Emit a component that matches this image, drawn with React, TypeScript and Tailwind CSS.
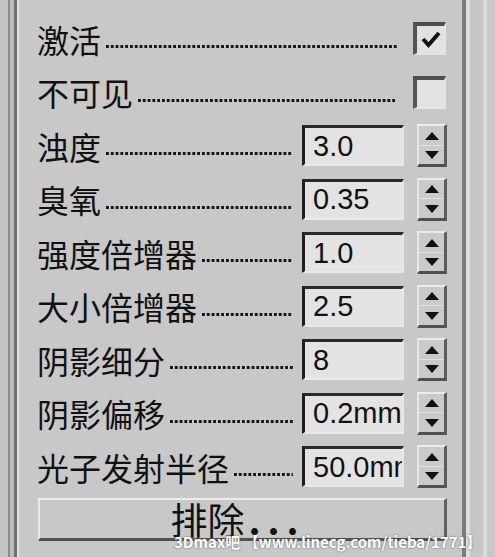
const CJK = "font-['Noto_Sans_CJK_SC','Noto_Sans',sans-serif]";
const NUM = "font-['Liberation_Sans',Arial,sans-serif]";

const checks = [
  { label: "激活", checked: true },
  { label: "不可见", checked: false },
];

const spinners = [
  { label: "浊度", value: "3.0" },
  { label: "臭氧", value: "0.35" },
  { label: "强度倍增器", value: "1.0" },
  { label: "大小倍增器", value: "2.5" },
  { label: "阴影细分", value: "8" },
  { label: "阴影偏移", value: "0.2mm" },
  { label: "光子发射半径", value: "50.0mm" },
];

const Leader = ({ gap }: { gap: string }) => (
  <div
    className={`ml-[5px] mt-[16px] h-[3px] flex-1 bg-[linear-gradient(to_right,#161616_2.5px,transparent_2.5px)] bg-[length:4.8px_3px] bg-repeat-x ${gap}`}
  />
);

const CheckBox = ({ checked }: { checked: boolean }) => (
  <div className="mr-[1px] flex h-[33px] w-[33px] items-center justify-center border-t-[4px] border-l-[4px] border-r-2 border-b-2 border-t-[#4e4e4e] border-l-[#555] border-r-[#e4e4e4] border-b-[#e4e4e4] bg-[#e2e2e2]">
    {checked && (
      <svg width="20" height="18" viewBox="0 0 20 18">
        <path d="M2 8 L7.5 14 L18 2" fill="none" stroke="#111" strokeWidth="4" strokeLinejoin="miter" />
      </svg>
    )}
  </div>
);

const Spinner = () => (
  <div className="ml-[13px] flex h-[43px] w-[30px] flex-col border-t-2 border-l-2 border-b-[3px] border-r-[3px] border-t-[#ececec] border-l-[#e6e6e6] border-b-[#505050] border-r-[#5c5c5c] bg-[#cacaca]">
    <div className="flex flex-1 items-center justify-center border-b border-b-[#e2e2e2]">
      <svg width="14" height="8" viewBox="0 0 14 8">
        <path d="M7 0 L14 8 L0 8 Z" fill="#111" />
      </svg>
    </div>
    <div className="flex flex-1 items-center justify-center">
      <svg width="14" height="8" viewBox="0 0 14 8">
        <path d="M0 0 L14 0 L7 8 Z" fill="#111" />
      </svg>
    </div>
  </div>
);

export default function App() {
  return (
    <div className={`relative flex h-[557px] w-[495px] overflow-hidden bg-[#c8c8c8] ${CJK}`}>
      {/* left panel edges */}
      <div className="flex shrink-0">
        <div className="w-[8px] bg-[#c4c4c4]" />
        <div className="w-[2px] bg-[#8a8a8a]" />
        <div className="w-[4px] bg-[#bcbcbc]" />
        <div className="w-[3px] bg-[#6e6e6e]" />
        <div className="w-[2px] bg-[#e2e2e2]" />
      </div>

      <div className="flex flex-1 flex-col pl-[18px] pr-[15px] pt-[12px]">
        {checks.map((c) => (
          <div key={c.label} className="flex h-[53.5px] items-center">
            <span className="text-[32px] leading-none text-[#111]">{c.label}</span>
            <Leader gap="mr-[16px]" />
            <CheckBox checked={c.checked} />
          </div>
        ))}
        {spinners.map((s) => (
          <div key={s.label} className="flex h-[53.5px] items-center">
            <span className="text-[32px] leading-none text-[#111]">{s.label}</span>
            <Leader gap="mr-[9px]" />
            <div
              className={`flex h-[41px] w-[102px] items-center overflow-hidden whitespace-nowrap border-t-[3px] border-l-[3px] border-r-2 border-b-2 border-t-[#2a2a2a] border-l-[#1e1e1e] border-r-[#e8e8e8] border-b-[#e8e8e8] bg-[#e3e3e3] pl-[8px] text-[29px] leading-none text-[#111] ${NUM}`}
            >
              {s.value}
            </div>
            <Spinner />
          </div>
        ))}

        <button
          type="button"
          className="ml-[1px] mt-[4.5px] flex h-[43px] items-center justify-center border-t-2 border-l-2 border-b-[3px] border-r-[3px] border-t-[#ececec] border-l-[#e8e8e8] border-b-[#505050] border-r-[#606060] bg-[#c8c8c8] pr-[8px] text-[37px] leading-none text-[#111]"
        >
          排除<span className="ml-[4px] font-bold tracking-[7px]">...</span>
        </button>
      </div>

      {/* right panel edges */}
      <div className="flex shrink-0">
        <div className="w-[4px] bg-[#7a7a7a]" />
        <div className="w-[4px] bg-[#dedede]" />
        <div className="w-[13px] bg-[#c6c6c6]" />
        <div className="w-[4px] bg-[#dcdcdc]" />
        <div className="w-[8px] bg-[#c8c8c8]" />
      </div>

      {/* watermark */}
      <div className="absolute left-[174px] top-[534px] whitespace-nowrap text-[15px] font-bold leading-none text-white [text-shadow:0_0_2px_#555]">
        3Dmax吧 【www.linecg.com/tieba/1771】
      </div>
    </div>
  );
}
